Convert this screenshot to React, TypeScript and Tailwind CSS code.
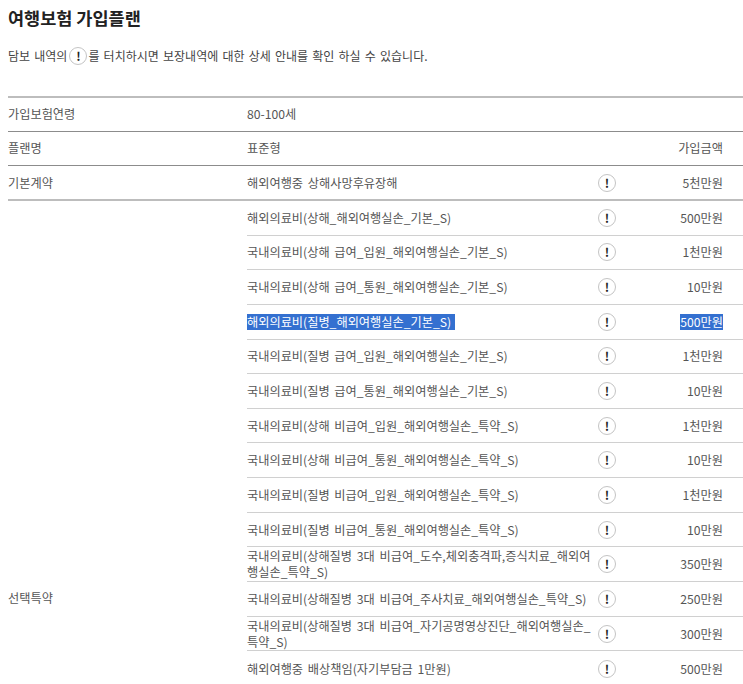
const rows: { t: string; a: string; sel?: boolean }[] = [
  { t: "해외의료비(상해_해외여행실손_기본_S)", a: "500만원" },
  { t: "국내의료비(상해 급여_입원_해외여행실손_기본_S)", a: "1천만원" },
  { t: "국내의료비(상해 급여_통원_해외여행실손_기본_S)", a: "10만원" },
  { t: "해외의료비(질병_해외여행실손_기본_S)", a: "500만원", sel: true },
  { t: "국내의료비(질병 급여_입원_해외여행실손_기본_S)", a: "1천만원" },
  { t: "국내의료비(질병 급여_통원_해외여행실손_기본_S)", a: "10만원" },
  { t: "국내의료비(상해 비급여_입원_해외여행실손_특약_S)", a: "1천만원" },
  { t: "국내의료비(상해 비급여_통원_해외여행실손_특약_S)", a: "10만원" },
  { t: "국내의료비(질병 비급여_입원_해외여행실손_특약_S)", a: "1천만원" },
  { t: "국내의료비(질병 비급여_통원_해외여행실손_특약_S)", a: "10만원" },
  { t: "국내의료비(상해질병 3대 비급여_도수,체외충격파,증식치료_해외여행실손_특약_S)", a: "350만원" },
  { t: "국내의료비(상해질병 3대 비급여_주사치료_해외여행실손_특약_S)", a: "250만원" },
  { t: "국내의료비(상해질병 3대 비급여_자기공명영상진단_해외여행실손_특약_S)", a: "300만원" },
  { t: "해외여행중 배상책임(자기부담금 1만원)", a: "500만원" },
];

function Bang() {
  return (
    <span className="inline-flex h-[18px] w-[18px] shrink-0 items-center justify-center rounded-full border border-[#c4c4c4] bg-white text-[12px] leading-none font-bold text-[#222]">
      !
    </span>
  );
}

export default function App() {
  return (
    <div
      className="h-[684px] w-[743px] overflow-hidden bg-white text-[12.2px] leading-[16px] [word-spacing:2px] text-[#555]"
      style={{ fontFamily: '"Noto Sans CJK KR", "Noto Sans", sans-serif' }}
    >
      <h1 className="pl-2 pt-[6px] text-[17.5px] leading-[24px] font-bold text-[#222] [word-spacing:0]">여행보험 가입플랜</h1>
      <p className="mt-[17px] flex h-[18px] items-center pl-2 text-[12px] text-[#444] [word-spacing:1.5px]">
        <span>담보 내역의</span>
        <span className="mx-[2px]"><Bang /></span>
        <span className="-ml-[1px]">를 터치하시면 보장내역에 대한 상세 안내를 확인 하실 수 있습니다.</span>
      </p>
      <div className="mt-[31px] ml-2 border-t-2 border-[#bdbdbd]">
        <div className="flex h-[33.5px] items-center border-b border-[#8c8c8c]">
          <div className="w-[239px]">가입보험연령</div>
          <div>80-100세</div>
        </div>
        <div className="flex h-[34.5px] items-center border-b border-[#8c8c8c]">
          <div className="w-[239px]">플랜명</div>
          <div className="flex-1">표준형</div>
          <div className="pr-5">가입금액</div>
        </div>
        <div className="flex h-[35px] items-center border-b-2 border-[#bdbdbd]">
          <div className="w-[239px]">기본계약</div>
          <div className="w-[351px]">해외여행중 상해사망후유장해</div>
          <Bang />
          <div className="flex-1 pr-5 text-right">5천만원</div>
        </div>
        <div className="flex">
          <div className="w-[239px] pt-[389px]">선택특약</div>
          <div className="flex-1">
            {rows.map((r, i) => (
              <div key={i} className="flex h-[34.65px] items-center border-b border-[#d0d0d0] last:border-b-0">
                <div className="w-[351px]">
                  {r.sel ? <span className="inline-block bg-[#3470d0] pr-[4px] text-white">{r.t}</span> : r.t}
                </div>
                <Bang />
                <div className="flex-1 pr-5 text-right">
                  {r.sel ? <span className="inline-block bg-[#3470d0] text-white">{r.a}</span> : r.a}
                </div>
              </div>
            ))}
          </div>
        </div>
      </div>
    </div>
  );
}
